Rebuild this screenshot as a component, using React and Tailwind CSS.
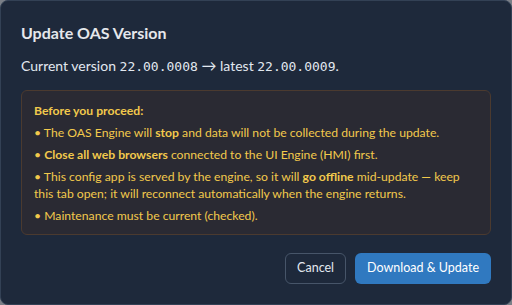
export default function App() {
  const mono = { fontFamily: '"DejaVu Sans Mono", "Liberation Mono", monospace' };
  return (
    <div className="w-[512px] h-[305px] bg-[#7a7f87] overflow-hidden" style={{ fontFamily: 'Lato, "Noto Sans", sans-serif' }}>
      <div className="w-[512px] h-[305px] bg-[#1e293b] border border-[#334155] rounded-lg px-5 pt-5 pb-5 flex flex-col">
        {/* Header */}
        <h2 className="text-[16px] leading-6 font-bold text-[#e5e7eb]">Update OAS Version</h2>
        <p className="mt-[10px] text-[14px] leading-5 text-[#e2e8f0]">
          Current version <span style={mono} className="text-[13px]">22.00.0008</span> <span className="text-[15px]">→</span> latest <span style={mono} className="text-[13px]">22.00.0009</span>.
        </p>

        {/* Warning */}
        <div className="mt-[13px] rounded-md border border-[#4b3a2f] bg-[#2a2a33] px-3 pt-[11px] pb-[10px] text-[12.2px] leading-[17px] text-[#f2c94c] flex flex-col gap-[5px]">
          <p className="font-bold">Before you proceed:</p>
          <p>• The OAS Engine will <b>stop</b> and data will not be collected during the update.</p>
          <p>• <b>Close all web browsers</b> connected to the UI Engine (HMI) first.</p>
          <p>
            • This config app is served by the engine, so it will <b>go offline</b> mid-update — keep
            <br />
            this tab open; it will reconnect automatically when the engine returns.
          </p>
          <p>• Maintenance must be current (checked).</p>
        </div>

        {/* Actions */}
        <div className="mt-auto flex justify-end gap-[9px]">
          <button className="h-[31px] px-[11px] rounded-md border border-[#475569] text-[12.5px] text-[#e2e8f0]">Cancel</button>
          <button className="h-[31px] px-3 rounded-md bg-[#3079c0] text-[12.5px] text-white">Download &amp; Update</button>
        </div>
      </div>
    </div>
  );
}
